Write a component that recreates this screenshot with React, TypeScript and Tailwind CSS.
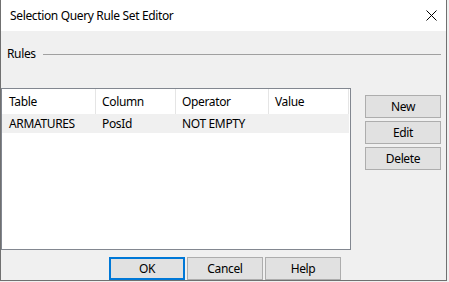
import React from "react";

const columns = [
  { label: "Table", width: "w-[94px]", pad: "pl-[7px]" },
  { label: "Column", width: "w-[80px]", pad: "pl-[6px]" },
  { label: "Operator", width: "w-[93px]", pad: "pl-[6px]" },
  { label: "Value", width: "w-[80px]", pad: "pl-[6px]" },
];

const rows = [["ARMATURES", "PosId", "NOT EMPTY", ""]];

function WinButton({ label, primary = false, w = "w-[76px]" }: { label: string; primary?: boolean; w?: string }) {
  return (
    <button
      className={
        "h-[23px] " +
        w +
        " bg-[#e1e1e1] flex items-center justify-center leading-none " +
        (primary ? "border-2 border-[#0078d7]" : "border border-[#adadad]")
      }
    >
      {label}
    </button>
  );
}

export default function App() {
  return (
    <div className="w-[449px] h-[282px] bg-[#f0f0f0] text-[12px] tracking-[-0.35px] text-black font-['Noto_Sans',sans-serif]">
      <div className="w-[447px] h-[281px] border-x border-b border-[#707070] flex flex-col">
        {/* Title bar */}
        <div className="h-[31px] bg-white flex items-center pl-[9px] pr-[8px]">
          <span className="mt-[1px]">Selection Query Rule Set Editor</span>
          <svg className="ml-auto mr-[1px]" width="11" height="11" viewBox="0 0 11 11">
            <path d="M0.5 0.5 L10.5 10.5 M10.5 0.5 L0.5 10.5" stroke="#000" strokeWidth="1" />
          </svg>
        </div>

        <div className="flex-1 flex flex-col">
          {/* Group header */}
          <div className="flex items-center h-[14px] mt-[16px] pl-[6px] pr-[5px]">
            <span>Rules</span>
            <div className="flex-1 h-px bg-[#a0a0a0] ml-[7px]" />
          </div>

          {/* List + side buttons */}
          <div className="flex mt-[27px]">
            <div className="w-[350px] h-[162px] border border-[#828790] bg-white">
              <div className="flex h-[25px]">
                {columns.map((c) => (
                  <div key={c.label} className={c.width + " " + c.pad + " h-full flex items-center border-r border-[#e5e5e5]"}>
                    {c.label}
                  </div>
                ))}
              </div>
              {rows.map((r, i) => (
                <div key={i} className="flex h-[19px] bg-[#f0f0f0] w-[347px]">
                  {r.map((cell, j) => (
                    <div key={j} className={columns[j].width + " " + columns[j].pad + " h-full flex items-center"}>
                      {cell}
                    </div>
                  ))}
                </div>
              ))}
            </div>
            <div className="flex flex-col gap-[3px] ml-[14px] mt-[7px]">
              <WinButton label="New" />
              <WinButton label="Edit" />
              <WinButton label="Delete" />
            </div>
          </div>

          {/* Dialog buttons */}
          <div className="flex gap-[2px] mt-[7px] pl-[108px]">
            <WinButton label="OK" primary />
            <WinButton label="Cancel" />
            <WinButton label="Help" />
          </div>
        </div>
      </div>
    </div>
  );
}
